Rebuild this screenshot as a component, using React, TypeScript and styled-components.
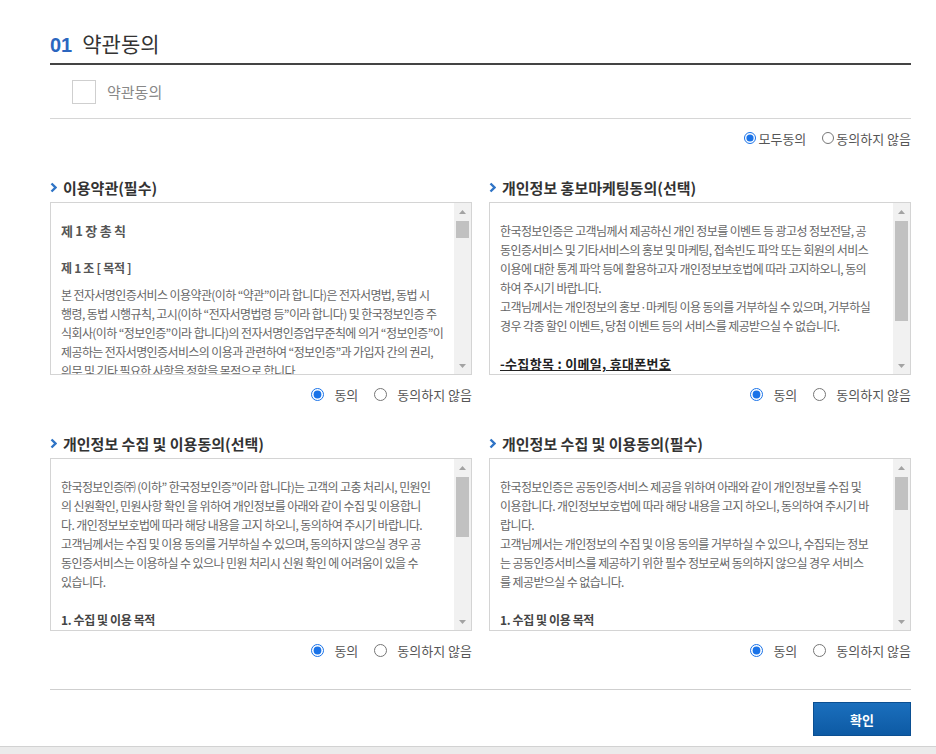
import React from 'react';
import styled, { createGlobalStyle } from 'styled-components';

const GlobalStyle = createGlobalStyle`
  html, body {
    margin: 0;
    padding: 0;
    background: #fff;
  }
  body {
    font-family: "Noto Sans CJK KR", "Noto Sans", sans-serif;
    color: #333;
  }
`;

const Page = styled.div`
  min-height: 100vh;
  display: flex;
  flex-direction: column;
`;

const Main = styled.div`
  padding: 0 25px 0 50px;
`;

const Title = styled.h2`
  display: flex;
  align-items: baseline;
  margin: 0;
  padding: 29px 0 6px;
  height: 28px;
  line-height: 28px;
  font-size: 21px;
  font-weight: 400;
  color: #333;
  border-bottom: 2px solid #444;
`;

const StepNo = styled.span`
  color: #2b66bf;
  font-size: 20px;
  font-weight: 700;
  margin-right: 10px;
  font-family: "Liberation Sans", Arial, sans-serif;
`;

const CheckRow = styled.label`
  display: flex;
  align-items: center;
  height: 53px;
  padding-left: 22px;
  border-bottom: 1px solid #d6d6d6;
`;

const CheckBox = styled.span`
  width: 22px;
  height: 22px;
  border: 1px solid #cfcfcf;
  background: #fff;
`;

const CheckLabel = styled.span`
  margin-left: 11px;
  font-size: 15px;
  color: #888;
`;

const AllRow = styled.div`
  display: flex;
  justify-content: flex-end;
  align-items: center;
  gap: 16px;
  padding-top: 11px;
  height: 16px;
`;

const Radio = styled.input.attrs({ type: 'radio' })<{ $small?: boolean }>`
  margin: 0 ${p => (p.$small ? '2px' : '10px')} 0 0;
  width: ${p => (p.$small ? '12px' : '13px')};
  height: ${p => (p.$small ? '12px' : '13px')};
  accent-color: #1a73e8;
`;

const RadioLabel = styled.label`
  display: flex;
  align-items: center;
  font-size: 13px;
  color: #555;
  white-space: nowrap;
`;

const Grid = styled.div`
  display: grid;
  grid-template-columns: 422px 422px;
  column-gap: 17px;
  row-gap: 29px;
  margin-top: 31px;
`;

const Section = styled.section``;

const SectionTitle = styled.h3`
  display: flex;
  align-items: center;
  margin: 0 0 5px;
  height: 20px;
  font-size: 15px;
  font-weight: 700;
  color: #333;
  svg {
    margin-right: 6px;
  }
`;

const Box = styled.div`
  display: flex;
  height: 171px;
  border: 1px solid #d4d4d4;
  background: #fff;
`;

const BoxText = styled.div`
  flex: 1;
  overflow: hidden;
  padding: 18px 10px 0 10px;
  font-size: 12px;
  line-height: 19px;
  color: #666;
  letter-spacing: -0.6px;
`;

const Line = styled.div`
  white-space: nowrap;
`;

const Blank = styled.div`
  height: 19px;
`;

const Chapter = styled.div`
  font-size: 13px;
  font-weight: 700;
  color: #555;
  letter-spacing: -0.3px;
  margin-bottom: 18px;
`;

const Article = styled.div`
  font-size: 12px;
  font-weight: 700;
  color: #555;
  letter-spacing: -0.3px;
  margin-bottom: 8px;
`;

const Bold = styled.div`
  font-size: 12px;
  font-weight: 700;
  color: #444;
  letter-spacing: -0.4px;
`;

const Underlined = styled.div`
  font-size: 13px;
  font-weight: 700;
  color: #222;
  text-decoration: underline;
  letter-spacing: 0.3px;
`;

const ScrollBar = styled.div`
  width: 17px;
  display: flex;
  flex-direction: column;
  background: #f1f1f1;
`;

const ScrollBtn = styled.div`
  height: 17px;
  display: flex;
  align-items: center;
  justify-content: center;
`;

const Track = styled.div`
  flex: 1;
  padding: 1px 2px 0;
`;

const Thumb = styled.div`
  background: #c1c1c1;
`;

const AgreeRow = styled.div`
  display: flex;
  justify-content: flex-end;
  align-items: center;
  gap: 16px;
  margin-top: 9px;
  height: 20px;
`;

const Footer = styled.div`
  margin-top: 29px;
  border-top: 1px solid #cfcfcf;
  padding-top: 12px;
  display: flex;
  justify-content: flex-end;
`;

const ConfirmButton = styled.button`
  width: 98px;
  height: 34px;
  border: 1px solid #0b4f92;
  background: linear-gradient(#1b6fbd, #0d5aa4);
  color: #fff;
  font-family: inherit;
  font-size: 13px;
  font-weight: 700;
  cursor: pointer;
`;

const BottomStrip = styled.div`
  margin-top: 10px;
  flex: 1;
  min-height: 8px;
  background: #ebebeb;
  border-top: 1px solid #d2d2d2;
`;

const Chevron = () => (
  <svg width="7" height="11" viewBox="0 0 7 11">
    <polyline points="1.5,1.5 5.5,5.5 1.5,9.5" fill="none" stroke="#2f74c6" strokeWidth="2.4" />
  </svg>
);

const Arrow = ({ up }: { up?: boolean }) => (
  <svg width="7" height="4" viewBox="0 0 7 4">
    <polygon points={up ? '0,4 7,4 3.5,0' : '0,0 7,0 3.5,4'} fill="#a3a3a3" />
  </svg>
);

const Scroll = ({ size }: { size: number }) => (
  <ScrollBar>
    <ScrollBtn>
      <Arrow up />
    </ScrollBtn>
    <Track>
      <Thumb style={{ height: size }} />
    </Track>
    <ScrollBtn>
      <Arrow />
    </ScrollBtn>
  </ScrollBar>
);

const Agree = ({ name }: { name: string }) => (
  <AgreeRow>
    <RadioLabel>
      <Radio name={name} defaultChecked />
      동의
    </RadioLabel>
    <RadioLabel>
      <Radio name={name} />
      동의하지 않음
    </RadioLabel>
  </AgreeRow>
);

const App: React.FC = () => {
  return (
    <Page>
      <GlobalStyle />
      <Main>
        <Title>
          <StepNo>01</StepNo>약관동의
        </Title>
        <CheckRow>
          <CheckBox />
          <CheckLabel>약관동의</CheckLabel>
        </CheckRow>
        <AllRow>
          <RadioLabel>
            <Radio $small name="all" defaultChecked />
            모두동의
          </RadioLabel>
          <RadioLabel>
            <Radio $small name="all" />
            동의하지 않음
          </RadioLabel>
        </AllRow>

        <Grid>
          <Section>
            <SectionTitle>
              <Chevron />
              이용약관(필수)
            </SectionTitle>
            <Box>
              <BoxText>
                <Chapter>제 1 장 총 칙</Chapter>
                <Article>제 1 조 [ 목적 ]</Article>
                <Line>본 전자서명인증서비스 이용약관(이하 “약관”이라 합니다)은 전자서명법, 동법 시</Line>
                <Line>행령, 동법 시행규칙, 고시(이하 “전자서명법령 등”이라 합니다) 및 한국정보인증 주</Line>
                <Line>식회사(이하 “정보인증”이라 합니다)의 전자서명인증업무준칙에 의거 “정보인증”이</Line>
                <Line>제공하는 전자서명인증서비스의 이용과 관련하여 “정보인증”과 가입자 간의 권리,</Line>
                <Line>의무 및 기타 필요한 사항을 정함을 목적으로 합니다.</Line>
              </BoxText>
              <Scroll size={17} />
            </Box>
            <Agree name="terms" />
          </Section>

          <Section>
            <SectionTitle>
              <Chevron />
              개인정보 홍보마케팅동의(선택)
            </SectionTitle>
            <Box>
              <BoxText>
                <Line>한국정보인증은 고객님께서 제공하신 개인 정보를 이벤트 등 광고성 정보전달, 공</Line>
                <Line>동인증서비스 및 기타서비스의 홍보 및 마케팅, 접속빈도 파악 또는 회원의 서비스</Line>
                <Line>이용에 대한 통계 파악 등에 활용하고자 개인정보보호법에 따라 고지하오니, 동의</Line>
                <Line>하여 주시기 바랍니다.</Line>
                <Line>고객님께서는 개인정보의 홍보·마케팅 이용 동의를 거부하실 수 있으며, 거부하실</Line>
                <Line>경우 각종 할인 이벤트, 당첨 이벤트 등의 서비스를 제공받으실 수 없습니다.</Line>
                <Blank />
                <Underlined>-수집항목 : 이메일, 휴대폰번호</Underlined>
              </BoxText>
              <Scroll size={100} />
            </Box>
            <Agree name="marketing" />
          </Section>

          <Section>
            <SectionTitle>
              <Chevron />
              개인정보 수집 및 이용동의(선택)
            </SectionTitle>
            <Box>
              <BoxText>
                <Line>한국정보인증㈜ (이하” 한국정보인증”이라 합니다)는 고객의 고충 처리시, 민원인</Line>
                <Line>의 신원확인, 민원사항 확인 을 위하여 개인정보를 아래와 같이 수집 및 이용합니</Line>
                <Line>다. 개인정보보호법에 따라 해당 내용을 고지 하오니, 동의하여 주시기 바랍니다.</Line>
                <Line>고객님께서는 수집 및 이용 동의를 거부하실 수 있으며, 동의하지 않으실 경우 공</Line>
                <Line>동인증서비스는 이용하실 수 있으나 민원 처리시 신원 확인 에 어려움이 있을 수</Line>
                <Line>있습니다.</Line>
                <Blank />
                <Bold>1. 수집 및 이용 목적</Bold>
              </BoxText>
              <Scroll size={60} />
            </Box>
            <Agree name="optional" />
          </Section>

          <Section>
            <SectionTitle>
              <Chevron />
              개인정보 수집 및 이용동의(필수)
            </SectionTitle>
            <Box>
              <BoxText>
                <Line>한국정보인증은 공동인증서비스 제공을 위하여 아래와 같이 개인정보를 수집 및</Line>
                <Line>이용합니다. 개인정보보호법에 따라 해당 내용을 고지 하오니, 동의하여 주시기 바</Line>
                <Line>랍니다.</Line>
                <Line>고객님께서는 개인정보의 수집 및 이용 동의를 거부하실 수 있으나, 수집되는 정보</Line>
                <Line>는 공동인증서비스를 제공하기 위한 필수 정보로써 동의하지 않으실 경우 서비스</Line>
                <Line>를 제공받으실 수 없습니다.</Line>
                <Blank />
                <Bold>1. 수집 및 이용 목적</Bold>
              </BoxText>
              <Scroll size={33} />
            </Box>
            <Agree name="required" />
          </Section>
        </Grid>

        <Footer>
          <ConfirmButton type="button">확인</ConfirmButton>
        </Footer>
      </Main>
      <BottomStrip />
    </Page>
  );
};

export default App;
